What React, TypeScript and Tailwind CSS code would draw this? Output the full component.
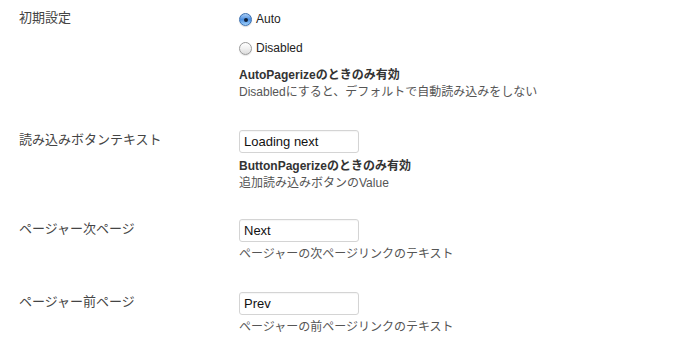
import React, { useState } from 'react';

const font = { fontFamily: '"Liberation Sans", "Noto Sans CJK JP", sans-serif' };

function Radio({ checked, label, onClick }: { checked: boolean; label: string; onClick: () => void }) {
  return (
    <div className="flex items-center h-[17px] cursor-pointer" onClick={onClick}>
      {checked ? (
        <span className="w-[13px] h-[13px] rounded-full border border-[#3a6fb0] bg-gradient-to-b from-[#a9cdf5] via-[#4b8fe0] to-[#9fd0fb] flex items-center justify-center shadow-[0_1px_1px_rgba(0,0,0,0.15)]">
          <span className="w-[4px] h-[4px] rounded-full bg-[#10213a]" />
        </span>
      ) : (
        <span className="w-[13px] h-[13px] rounded-full border border-[#9a9a9a] bg-gradient-to-b from-[#ffffff] via-[#f0f0f0] to-[#dcdcdc] shadow-[0_1px_1px_rgba(0,0,0,0.1)]" />
      )}
      <span className="ml-[4px] text-[12px] text-[#222]">{label}</span>
    </div>
  );
}

function TextField({ defaultValue }: { defaultValue: string }) {
  return (
    <input
      type="text"
      defaultValue={defaultValue}
      style={font}
      className="block w-[120px] h-[23px] border border-[#d4d4d4] rounded-[3px] px-[4px] text-[13px] text-[#111] outline-none shadow-[inset_0_1px_1px_rgba(0,0,0,0.04)]"
    />
  );
}

export default function App() {
  const [mode, setMode] = useState<'auto' | 'disabled'>('auto');

  return (
    <div style={font} className="w-[700px] h-[350px] bg-white pl-[19px] text-[12px] leading-[17px] overflow-hidden">
      {/* 初期設定 */}
      <div className="grid grid-cols-[220px_1fr] pt-[9px]">
        <div className="text-[13px] text-[#444]">初期設定</div>
        <div className="pt-[2px]">
          <Radio checked={mode === 'auto'} label="Auto" onClick={() => setMode('auto')} />
          <div className="mt-[12px]">
            <Radio checked={mode === 'disabled'} label="Disabled" onClick={() => setMode('disabled')} />
          </div>
          <p className="mt-[10px] font-bold text-[#333]">AutoPagerizeのときのみ有効</p>
          <p className="text-[#555]">Disabledにすると、デフォルトで自動読み込みをしない</p>
        </div>
      </div>

      {/* 読み込みボタンテキスト */}
      <div className="grid grid-cols-[220px_1fr] mt-[29px]">
        <div className="text-[13px] text-[#444] pt-[1px]">読み込みボタンテキスト</div>
        <div>
          <TextField defaultValue="Loading next" />
          <p className="mt-[5px] font-bold text-[#333]">ButtonPagerizeのときのみ有効</p>
          <p className="text-[#555]">追加読み込みボタンのValue</p>
        </div>
      </div>

      {/* ページャー次ページ */}
      <div className="grid grid-cols-[220px_1fr] mt-[27px]">
        <div className="text-[13px] text-[#444] pt-[1px]">ページャー次ページ</div>
        <div>
          <TextField defaultValue="Next" />
          <p className="mt-[4px] text-[#555]">ページャーの次ページリンクのテキスト</p>
        </div>
      </div>

      {/* ページャー前ページ */}
      <div className="grid grid-cols-[220px_1fr] mt-[29px]">
        <div className="text-[13px] text-[#444] pt-[1px]">ページャー前ページ</div>
        <div>
          <TextField defaultValue="Prev" />
          <p className="mt-[4px] text-[#555]">ページャーの前ページリンクのテキスト</p>
        </div>
      </div>
    </div>
  );
}
